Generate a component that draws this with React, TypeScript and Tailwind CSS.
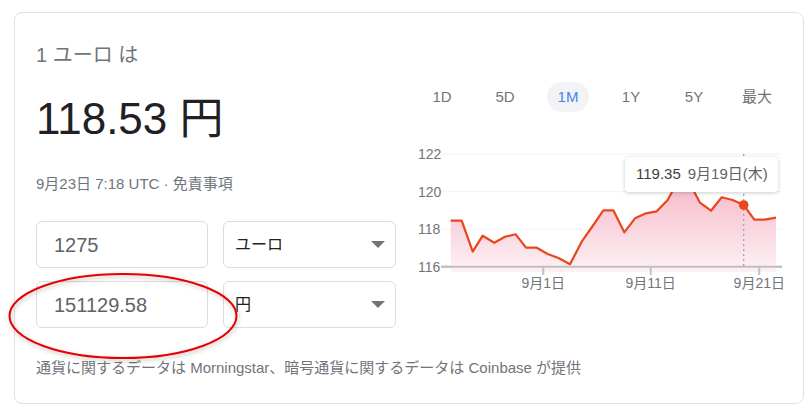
const pts: [number, number][] = [
  [450.7, 220.7], [461.7, 220.7], [472.7, 251.7], [482.7, 235.7], [494.3, 242.7],
  [505, 236.7], [515.7, 234.3], [526, 247.7], [536.7, 247.7], [547.7, 254],
  [559, 258.3], [570, 264.3], [581.7, 241.7], [592.7, 226], [603.3, 210.3],
  [613.3, 210.3], [624.3, 232.3], [635, 218.3], [646, 213.3], [656.7, 211.3],
  [667.7, 200], [678.3, 180], [689, 182], [700, 202.7], [711, 210.7],
  [721.7, 197.3], [732.7, 200], [743.7, 205], [754.3, 219.7], [765, 219.7],
  [776, 217.7],
];

const tabs = ["1D", "5D", "1M", "1Y", "5Y", "最大"];

function Caret() {
  return (
    <svg width="14" height="7" viewBox="0 0 14 7">
      <polygon points="0,0 14,0 7,7" fill="#70757a" />
    </svg>
  );
}

function Chart() {
  const line = pts.map((p) => p.join(",")).join(" ");
  const area = `M450.7,272 L${pts.map((p) => p.join(",")).join(" L")} L776,272 Z`;
  const grid = [
    { v: "122", y: 154 },
    { v: "120", y: 191.6 },
    { v: "118", y: 229.2 },
    { v: "116", y: 266.7 },
  ];
  const ticks = [
    { x: 543.3, t: "9月1日" },
    { x: 650.7, t: "9月11日" },
    { x: 759.3, t: "9月21日" },
  ];
  return (
    <div className="relative mt-[28px] h-[160px] w-[380px]">
      <svg width="380" height="160" viewBox="410 140 380 160">
        <defs>
          <linearGradient id="fill" x1="0" y1="0" x2="0" y2="1">
            <stop offset="0" stopColor="#f5b8c8" />
            <stop offset="1" stopColor="#fdf1f4" />
          </linearGradient>
        </defs>
        {grid.map((g) => (
          <g key={g.v}>
            <line x1="441" x2="782" y1={g.y} y2={g.y} stroke={g.v === "116" ? "#bdc1c6" : "#f1f3f4"} strokeWidth={g.v === "116" ? 2 : 1} />
            <text x="418" y={g.y + 5} fontSize="14" fill="#70757a">{g.v}</text>
          </g>
        ))}
        <path d={area} fill="url(#fill)" />
        <line x1="441" x2="782" y1="266.7" y2="266.7" stroke="#bdc1c6" strokeWidth="2" />
        {ticks.map((t) => (
          <g key={t.t}>
            <line x1={t.x} x2={t.x} y1="266" y2="275" stroke="#bdc1c6" strokeWidth="2" />
            <text x={t.x} y="288" fontSize="14" fill="#70757a" textAnchor="middle">{t.t}</text>
          </g>
        ))}
        <line x1="743.7" x2="743.7" y1="154" y2="266" stroke="#9aa0a6" strokeWidth="1.2" strokeDasharray="2 3" />
        <polyline points={line} fill="none" stroke="#e8471c" strokeWidth="2.2" strokeLinejoin="round" />
        <circle cx="743.7" cy="205" r="4.8" fill="#e8471c" />
      </svg>
      <div className="absolute left-[215px] top-[17px] flex h-[35px] w-[153px] items-center gap-[7px] rounded-[4px] bg-white pl-[11px] text-[15px] shadow-[0_1px_4px_rgba(0,0,0,0.2)]">
        <span className="text-[#3c4043]">119.35</span>
        <span className="text-[#5f6368]">9月19日(木)</span>
      </div>
    </div>
  );
}

export default function App() {
  return (
    <div className="relative h-[413px] w-[811px] bg-white pl-[14px] pt-[12px] font-['Liberation_Sans','Noto_Sans_CJK_JP',sans-serif]">
      <div className="h-[392px] w-[790px] rounded-[8px] border border-[#dfe1e5] pl-[21px] pt-[28px]">
        <div className="flex">
          {/* left: converter */}
          <div className="w-[360px]">
            <p className="text-[20px] leading-[28px] text-[#70757a]">1 ユーロ は</p>
            <p className="mt-[22px] text-[44px] leading-[56px] text-[#202124]">118.53 円</p>
            <p className="mt-[27px] text-[15px] leading-[20px] text-[#70757a]">9月23日 7:18 UTC · 免責事項</p>
            <div className="mt-[27px] flex flex-col gap-[13px]">
              <div className="flex gap-[15px]">
                <div className="flex h-[47px] w-[172px] items-center rounded-[6px] border border-[#dadce0] pl-[17px] text-[20px] text-[#5f6368]">1275</div>
                <div className="flex h-[47px] w-[173px] items-center justify-between rounded-[6px] border border-[#dadce0] pl-[11px] pr-[10px] text-[16px] text-[#202124]">
                  <span>ユーロ</span>
                  <Caret />
                </div>
              </div>
              <div className="flex gap-[15px]">
                <div className="flex h-[47px] w-[172px] items-center rounded-[6px] border border-[#dadce0] pl-[17px] text-[20px] text-[#5f6368]">151129.58</div>
                <div className="flex h-[47px] w-[173px] items-center justify-between rounded-[6px] border border-[#dadce0] pl-[11px] pr-[10px] text-[16px] text-[#202124]">
                  <span>円</span>
                  <Caret />
                </div>
              </div>
            </div>
          </div>

          {/* right: chart */}
          <div className="ml-[14px] w-[380px]">
            <div className="mt-[41px] flex gap-[21px] pl-[11px]">
              {tabs.map((t) => (
                <div
                  key={t}
                  className={
                    t === "1M"
                      ? "flex h-[30px] w-[42px] items-center justify-center rounded-full bg-[#f1f3f4] text-[15px] text-[#4285f4]"
                      : "flex h-[30px] w-[42px] items-center justify-center rounded-full text-[15px] text-[#70757a]"
                  }
                >
                  {t}
                </div>
              ))}
            </div>
            <Chart />
          </div>
        </div>
        <p className="mt-[30px] text-[15px] leading-[20px] text-[#70757a]">
          通貨に関するデータは Morningstar、暗号通貨に関するデータは Coinbase が提供
        </p>
      </div>

      {/* red annotation circle */}
      <svg className="pointer-events-none absolute left-0 top-0" width="811" height="413">
        <defs>
          <filter id="sh" x="-10%" y="-20%" width="120%" height="140%">
            <feDropShadow dx="1" dy="2" stdDeviation="2" floodColor="#000" floodOpacity="0.25" />
          </filter>
        </defs>
        <ellipse cx="123" cy="316" rx="113.5" ry="42" fill="none" stroke="#e60000" strokeWidth="2" filter="url(#sh)" />
      </svg>
    </div>
  );
}
